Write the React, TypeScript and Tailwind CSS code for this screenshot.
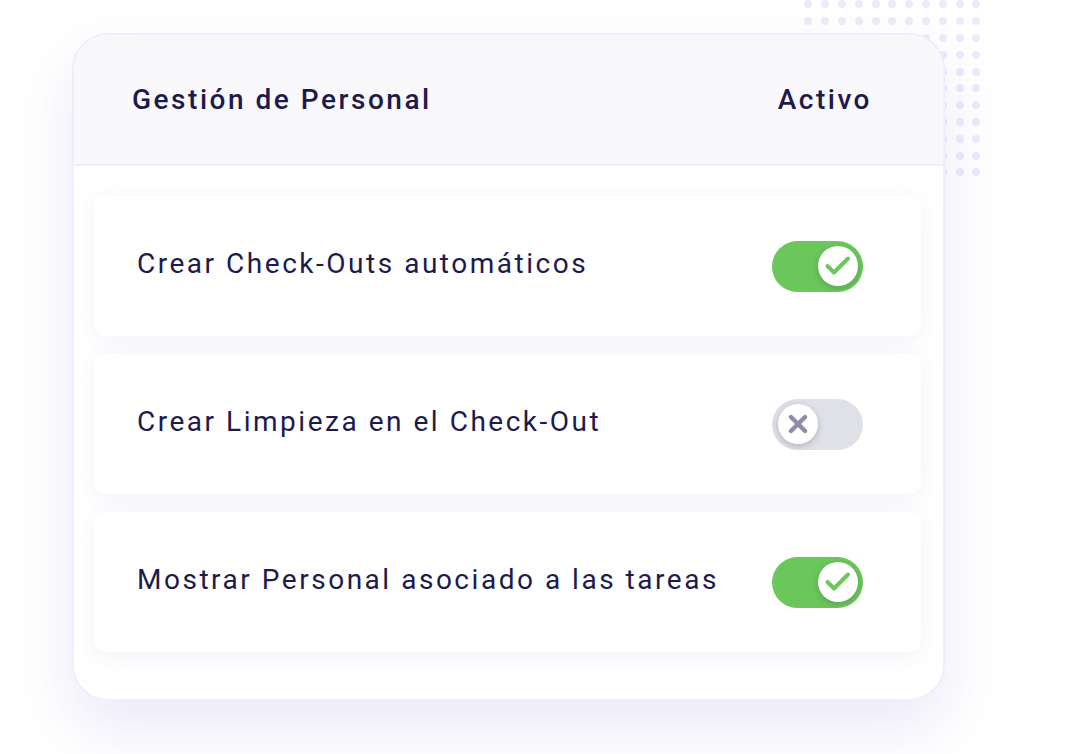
import type { ReactNode } from "react";

const rows = [
  { label: "Crear Check-Outs automáticos", on: true },
  { label: "Crear Limpieza en el Check-Out", on: false },
  { label: "Mostrar Personal asociado a las tareas", on: true },
];

function Toggle({ on }: { on: boolean }) {
  return (
    <div
      className={
        on
          ? "flex h-[51px] w-[91px] items-center justify-end rounded-full bg-[#6bc75a] px-[5px]"
          : "flex h-[51px] w-[91px] items-center justify-start rounded-full bg-[#e0e0e7] px-[6px]"
      }
    >
      <div className="flex h-[40px] w-[40px] items-center justify-center rounded-full bg-white shadow-[0_2px_6px_rgba(40,40,80,0.25)]">
        {on ? (
          <svg width="28" height="28" viewBox="0 0 28 28" fill="none">
            <path d="M3.5 14l6.5 6.5L24 6.5" stroke="#6bc75a" strokeWidth="4" strokeLinecap="round" strokeLinejoin="round" />
          </svg>
        ) : (
          <svg width="20" height="20" viewBox="0 0 20 20" fill="none">
            <path d="M3 3l14 14M17 3L3 17" stroke="#8f8ca7" strokeWidth="4.4" strokeLinecap="round" />
          </svg>
        )}
      </div>
    </div>
  );
}

function Row({ children, on }: { children: ReactNode; on: boolean }) {
  return (
    <div className="flex h-[140px] items-center justify-between rounded-[12px] bg-white pl-[43px] pr-[58px] shadow-[0_4px_22px_rgba(70,60,170,0.07)]">
      <span className="mb-[4px] text-[28px] tracking-[0.09em] text-[#1d1a4e]">{children}</span>
      <Toggle on={on} />
    </div>
  );
}

function Dots() {
  return (
    <div className="absolute left-[800px] top-[-4px] grid grid-cols-[repeat(11,16.8px)] grid-rows-[repeat(11,16.8px)]">
      {Array.from({ length: 121 }).map((_, i) => (
        <div key={i} className="flex items-center justify-center">
          <div className="h-[8px] w-[8px] rounded-full bg-[#ecebfb]" />
        </div>
      ))}
    </div>
  );
}

export default function App() {
  return (
    <div
      className="relative h-[754px] w-[1080px] overflow-hidden bg-white"
      style={{ fontFamily: "Roboto, 'Noto Sans', sans-serif" }}
    >
      <Dots />
      <div className="relative pl-[72px] pt-[33px]">
        <div className="w-[873px] overflow-hidden rounded-[36px] border-2 border-[#efeefc] bg-white shadow-[0_28px_60px_rgba(90,80,200,0.12)]">
          <div className="flex h-[131px] items-center justify-between border-b-2 border-[#efeefc] bg-[#f9f9fc] pl-[58px] pr-[71px]">
            <span className="text-[28px] font-medium tracking-[0.09em] text-[#1d1a4e]">Gestión de Personal</span>
            <span className="text-[28px] font-medium tracking-[0.09em] text-[#1d1a4e]">Activo</span>
          </div>
          <div className="flex flex-col gap-[18px] pb-[47px] pl-[20px] pr-[22px] pt-[30px]">
            {rows.map((r) => (
              <Row key={r.label} on={r.on}>
                {r.label}
              </Row>
            ))}
          </div>
        </div>
      </div>
    </div>
  );
}
